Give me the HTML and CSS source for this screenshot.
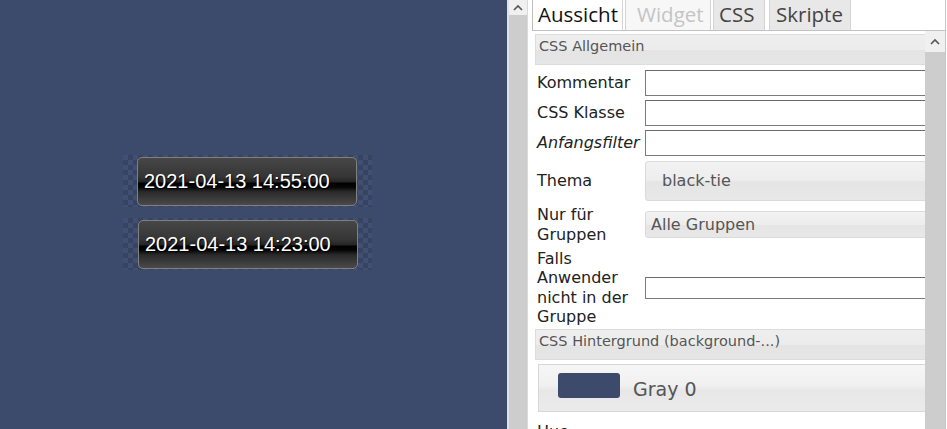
FILE: index.html
```html
<!DOCTYPE html>
<html lang="de">
<head>
<meta charset="utf-8">
<title>Editor</title>
<link rel="stylesheet" href="styles.css">
</head>
<body>
<div class="canvas">
  <div class="widget w1"><div class="clock">2021-04-13 14:55:00</div></div>
  <div class="widget w2"><div class="clock">2021-04-13 14:23:00</div></div>
</div>
<div class="scrollbar left-bar">
  <div class="arrow"><svg width="10" height="7" viewBox="0 0 10 7"><polyline points="1,6 5,2 9,6" fill="none" stroke="#555" stroke-width="1.6"/></svg></div>
  <div class="track"></div>
</div>
<div class="panel">
  <div class="frame">
    <div class="tabs">
      <div class="tab active t-view">Aussicht</div>
      <div class="tab disabled t-widget">Widget</div>
      <div class="tab t-css">CSS</div>
      <div class="tab t-scripts">Skripte</div>
    </div>
    <div class="body">
      <div class="content">
        <div class="group-header">CSS Allgemein</div>
        <div class="row r-input first">
          <label class="lbl">Kommentar</label>
          <div class="field"><div class="input"></div></div>
        </div>
        <div class="row r-input">
          <label class="lbl">CSS Klasse</label>
          <div class="field"><div class="input"></div></div>
        </div>
        <div class="row r-input">
          <label class="lbl italic">Anfangsfilter</label>
          <div class="field"><div class="input"></div></div>
        </div>
        <div class="row r-theme">
          <label class="lbl">Thema</label>
          <div class="field"><div class="select tall">black-tie</div></div>
        </div>
        <div class="row r-groups">
          <label class="lbl two">Nur für Gruppen</label>
          <div class="field"><div class="select short">Alle Gruppen</div></div>
        </div>
        <div class="row r-falls">
          <label class="lbl four">Falls Anwender nicht in der Gruppe</label>
          <div class="field"><div class="input thin"></div></div>
        </div>
        <div class="group-header second">CSS Hintergrund (background-...)</div>
        <div class="colorbox">
          <span class="swatch"></span>
          <span class="color-name">Gray 0</span>
        </div>
        <div class="row r-hue">
          <label class="lbl">Hue</label>
        </div>
      </div>
      <div class="scrollbar right-bar">
        <div class="arrow big"><svg width="10" height="7" viewBox="0 0 10 7"><polyline points="1,6 5,2 9,6" fill="none" stroke="#555" stroke-width="1.6"/></svg></div>
        <div class="track"></div>
      </div>
    </div>
  </div>
</div>
</body>
</html>
```

FILE: styles.css
```css
html, body {
  margin: 0;
  padding: 0;
}
body {
  width: 947px;
  height: 429px;
  overflow: hidden;
  display: flex;
  font-family: "DejaVu Sans", Verdana, sans-serif;
  background: #fff;
}

/* ---- canvas ---- */
.canvas {
  position: relative;
  width: 507px;
  height: 429px;
  background: #3c4a6b;
  flex: none;
}
.widget {
  position: absolute;
  left: 123px;
  width: 249px;
  height: 52px;
  padding-left: 14px;
  box-sizing: border-box;
  display: flex;
  align-items: center;
  background-color: #3c4a6b;
  background-image:
    conic-gradient(#37445f 25%, #424f74 0 50%, #37445f 0 75%, #424f74 0);
  background-size: 10px 10px;
}
.w1 { top: 155px; }
.w2 { top: 218px; padding-left: 15px; }
.clock {
  width: 220px;
  height: 49px;
  box-sizing: border-box;
  border: 1px solid #808080;
  border-radius: 5px;
  background: linear-gradient(#474747 0%, #353535 40%, #262626 50%, #000 54%, #050505 62%, #2a2a2a 72%, #4a4a4a 100%);
  color: #fff;
  font-family: "Liberation Sans", Arial, sans-serif;
  font-size: 20px;
  line-height: 47px;
  padding-left: 6px;
  text-shadow: 1px 1px 1px #000;
  white-space: nowrap;
  overflow: hidden;
}

/* ---- scrollbars ---- */
.scrollbar {
  display: flex;
  flex-direction: column;
  flex: none;
  width: 20px;
  background: #cdcdcd;
}
.left-bar {
  height: 429px;
  border-left: 2px solid #e2e2e2;
  width: 18px;
}
.arrow {
  height: 15px;
  background: #f0f0f0;
  display: flex;
  align-items: center;
  justify-content: center;
}
.arrow.big { height: 21px; }
.track { flex: 1; background: #cdcdcd; }

/* ---- panel ---- */
.panel {
  flex: 1;
  height: 429px;
  padding-right: 1px;
  display: flex;
  border-left: 1px solid #d9d9d9;
}
.frame {
  flex: 1;
  display: flex;
  flex-direction: column;
  border-right: 1px solid #c6c6c6;
  min-width: 0;
}
.tabs {
  height: 30px;
  margin-left: 4px;
  border-bottom: 1px solid #c2c2c2;
  display: flex;
  gap: 2px;
  align-items: stretch;
}
.tab {
  box-sizing: border-box;
  font-family: "Open Sans", "DejaVu Sans", sans-serif;
  font-size: 20.5px;
  line-height: 28px;
  background: #e8e8e8;
  color: #444;
  border: 1px solid #d4d4d4;
  border-top: none;
  border-bottom: none;
  white-space: nowrap;
}
.tab.active {
  background: #fff;
  color: #111;
  border-left-color: #bdbdbd;
  border-right-color: #d4d4d4;
}
.tab.disabled {
  background: #f7f7f7;
  color: #c4c4c4;
}
.t-view { width: 91px; padding-left: 5px; }
.t-widget { width: 86px; padding-left: 11px; }
.t-css { width: 52px; padding-left: 5px; }
.t-scripts { width: 82px; padding-left: 6px; margin-left: 2px; }

.body {
  flex: 1;
  display: flex;
  min-height: 0;
}
.content {
  flex: 1;
  min-width: 0;
  overflow: hidden;
  padding: 3px 0 0 7px;
  display: flex;
  flex-direction: column;
}
.group-header {
  height: 31px;
  box-sizing: border-box;
  margin-right: -10px;
  border: 1px solid #dcdcdc;
  background: linear-gradient(#eeeeee 0%, #ececec 50%, #e4e4e4 51%, #e6e6e6 100%);
  color: #555;
  font-size: 14.5px;
  line-height: 17px;
  padding: 3px 3px;
  white-space: nowrap;
  flex: none;
}
.group-header.second { margin-top: 1px; }

.row {
  display: grid;
  grid-template-columns: 110px 1fr;
  align-items: center;
  flex: none;
}
.lbl {
  padding-left: 2px;
  font-size: 16px;
  line-height: 19.5px;
  color: #222;
}
.lbl.italic { font-style: italic; }
.lbl.two { line-height: 20px; }
.field {
  margin-right: -10px;
}
.r-input { height: 30px; }
.r-input.first { margin-top: 3px; }
.r-theme { height: 47px; margin-top: -1px; }
.r-groups { height: 41px; }
.r-falls { height: 81px; padding-top: 2px; }
.r-hue { height: 20px; margin-top: 10px; align-items: start; }

.input {
  height: 26px;
  box-sizing: border-box;
  border: 1px solid #7a7a7a;
  border-top-color: #6a6a6a;
  background: #fff;
}
.input.thin { height: 22px; }
.select {
  box-sizing: border-box;
  border: 1px solid #dadada;
  border-radius: 3px 0 0 3px;
  background: linear-gradient(#f2f2f2 0%, #ededed 50%, #e5e5e5 51%, #e8e8e8 100%);
  color: #555;
  font-size: 16px;
  white-space: nowrap;
}
.select.tall {
  height: 40px;
  line-height: 38px;
  padding-left: 16px;
}
.select.short {
  height: 27px;
  line-height: 25px;
  padding-left: 5px;
}

.colorbox {
  flex: none;
  margin: 4px -10px 0 3px;
  height: 48px;
  box-sizing: border-box;
  border: 1px solid #d6d6d6;
  background: linear-gradient(#f6f6f6 0%, #f0f0f0 45%, #e7e7e7 55%, #ebebeb 100%);
  display: flex;
  align-items: flex-start;
  padding: 8px 0 0 19px;
}
.swatch {
  width: 62px;
  height: 25px;
  border-radius: 3px;
  background: #3c4a6b;
  flex: none;
}
.color-name {
  margin-left: 13px;
  margin-top: 5px;
  font-size: 19px;
  line-height: 22px;
  color: #555;
}
```
